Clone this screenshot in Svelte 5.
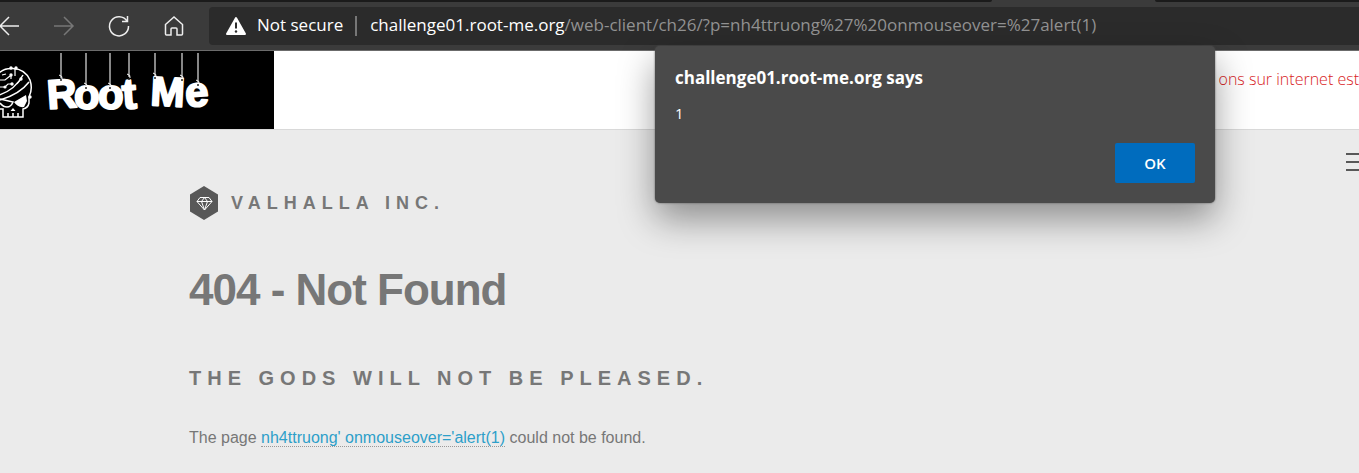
<script>
  const letters = [
    { c: 'R', x: 48, y: 58, r: -4, s: 41 },
    { c: 'o', x: 74, y: 58, r: 0, s: 42 },
    { c: 'o', x: 98, y: 58, r: 0, s: 42 },
    { c: 't', x: 123, y: 58, r: -4, s: 43 },
    { c: 'M', x: 150, y: 54, r: 3, s: 41 },
    { c: 'e', x: 186, y: 56, r: -4, s: 42 }
  ];
  const strings = [[61, 29], [86, 37], [110, 37], [129, 28], [155, 27], [182, 29], [198, 34]];
</script>

<div class="browser">
  <div class="tabs"><i></i><i></i></div>
  <nav class="toolbar" aria-label="Browser">
    <div class="actions">
      <button aria-label="Back"><svg viewBox="0 0 24 24"><path d="M22 12H3M12 3l-9 9 9 9" /></svg></button>
      <button aria-label="Forward" disabled><svg viewBox="0 0 24 24"><path d="M2 12h19M12 3l9 9-9 9" /></svg></button>
      <button aria-label="Refresh"><svg viewBox="0 0 24 24"><path d="M20 7.200A9.500 9.500 0 1 0 21.500 12M20.500 2v5.500H15" /></svg></button>
      <button aria-label="Home"><svg viewBox="0 0 24 24"><path d="M3.500 10.500 12 3l8.500 7.500V20q0 1-1 1H15v-6q0-1-1-1h-4q-1 0-1 1v6H4.500q-1 0-1-1z" /></svg></button>
    </div>
    <div class="address">
      <svg class="warn" viewBox="0 0 22 20"><path d="M11 2 20 18H2z" fill="#fff" stroke="#fff" stroke-width="2" stroke-linejoin="round" /><path d="M11 6.500v6" stroke="#2b2b2b" stroke-width="2" /><circle cx="11" cy="15.500" r="1.200" fill="#2b2b2b" /></svg>
      <span class="secure">Not secure</span>
      <span class="bar"></span>
      <span class="url"><b>challenge01.root-me.org</b>/web-client/ch26/?p=nh4ttruong%27%20onmouseover=%27alert(1)</span>
    </div>
  </nav>
</div>

<header class="banner">
  <a class="brand" href="#home" aria-label="Root Me">
    <svg viewBox="0 0 274 78">
      <g fill="none" stroke="#fff" stroke-width="1.500">
        <path d="M-1 22Q4 17 13 17.500Q25 18 30 29Q33 38 29 46V52Q28 57 23 58V66H3V58H-1" />
        <path d="M-1 44Q15 39 23 24M0 49Q20 43 29 31" />
        <path d="M0 29h5l5-4M0 36h5l3-3h4M15 18v7M11 24v4M21 28l-4 5M2 24l4-1" stroke-width="1.200" />
        <path d="M8 66v-4M13 66v-4M18 66v-4" />
        <path d="M0 48l13 3q-2 5-6 5-4 0-7-4" />
      </g>
      <g fill="#fff"><path d="M14 51 26 44 27 50 24 56Q18 57 14 51zM13 57l2.500 3h-5z" /><circle cx="11" cy="17" r="1.700" /><circle cx="16" cy="17" r="1.700" /><circle cx="11" cy="24" r="1.700" /><circle cx="12" cy="33" r="1.700" /><circle cx="21" cy="28" r="1.700" /><circle cx="5" cy="36" r="1.600" /><circle cx="30" cy="46" r="1.700" /></g>
      {#each letters as l}
        <text x={l.x} y={l.y} font-size={l.s} transform={`rotate(${l.r} ${l.x} ${l.y})`}>{l.c}</text>
      {/each}
      {#each strings as [x, y]}
        <path d={`M${x} 2V${y - 2}`} stroke="#b5b5b5" stroke-width="1.500" />
        <path d={`M${x - 2} ${y - 5}q4 1 3 4`} stroke="#fff" fill="none" />
        <circle cx={x} cy={y} r="1" fill="#222" />
      {/each}
    </svg>
  </a>
  <p>ons sur internet est</p>
</header>

<main>
  <button class="menu" aria-label="Menu"><i></i><i></i><i></i></button>
  <a class="company" href="#home">
    <svg viewBox="0 0 30 34"><path d="M15 0 29 8.500v17L15 34 1 25.500v-17z" fill="#585858" /><path d="M11 11.500h9l3 4-7.500 8.500-7.500-8.500zM8 15.500h15M12.500 15.500l3 8.500 3-8.500M12.500 15.500l3-4 3 4" fill="none" stroke="#fff" stroke-linejoin="round" /></svg>
    <span>VALHALLA INC.</span>
  </a>
  <h1>404 - Not Found</h1>
  <h2>THE GODS WILL NOT BE PLEASED.</h2>
  <p>The page <a href="#page">nh4ttruong' onmouseover='alert(1)</a> could not be found.</p>
</main>

<div class="dialog" role="alertdialog" aria-labelledby="says" aria-describedby="message">
  <strong id="says">challenge01.root-me.org says</strong>
  <p id="message">1</p>
  <button>OK</button>
</div>

<style>
  :global(body) { margin: 0; background: #ebebeb; overflow: hidden; }
  :global(#app) { position: relative; }
  button { border: 0; padding: 0; background: none; }
  .browser { background: #3b3b3b; border-bottom: 1px solid #6b6b6b; font-family: "Open Sans", sans-serif; }
  .tabs { display: flex; justify-content: space-between; height: 2px; }
  .tabs i { background: #1b1b1b; width: 73%; border-radius: 0 0 4px 0; }
  .tabs i + i { width: 15%; border-radius: 0 0 0 4px; }
  .toolbar { display: flex; align-items: center; padding: 5px 0; }
  .actions { display: flex; gap: 31px; width: 209px; margin-left: -3px; flex: none; }
  .actions button { width: 24px; height: 24px; }
  .actions svg { display: block; width: 24px; height: 24px; fill: none; stroke: #eee; stroke-width: 1.5; }
  .actions button:disabled svg { stroke: #777; }
  .address { flex: 1; min-width: 0; height: 38px; margin-left: 3px; display: flex; align-items: center; background: #2b2b2b; border-radius: 4px 0 0 4px; padding-left: 16px; color: #fff; font-size: 17px; line-height: 24px; white-space: nowrap; }
  .address span:not(.bar) { padding-bottom: 2px; }
  .warn { width: 22px; height: 20px; margin-right: 10px; }
  .bar { width: 2px; height: 20px; background: #777; margin: 0 13px 0 12px; }
  .url { color: #929292; }
  .url b { color: #fff; font-weight: 400; }
  .banner { display: flex; justify-content: space-between; height: 78px; background: #fff; border-bottom: 1px solid #d9d9d9; overflow: hidden; }
  .brand { width: 274px; background: #000; }
  .brand svg { display: block; width: 274px; height: 78px; }
  .brand text { fill: #fff; stroke: #fff; stroke-width: 2; stroke-linejoin: round; font-family: "Liberation Sans", sans-serif; font-weight: 700; }
  .banner p { margin: 16px 0 0; color: #d8221d; font: 300 16px/24px "Open Sans", sans-serif; white-space: nowrap; }
  main { position: relative; padding: 56px 189px 0; color: #777; font-family: "Liberation Sans", sans-serif; }
  .menu { position: absolute; right: -9px; top: 23px; width: 22px; display: grid; gap: 6px; }
  .menu i { height: 2px; background: #585858; }
  .company { display: flex; align-items: center; gap: 12px; color: inherit; text-decoration: none; font-size: 18px; font-weight: 900; letter-spacing: 6px; }
  .company svg { width: 30px; height: 34px; }
  h1 { margin: 42px 0 0; font-size: 44px; line-height: 56px; letter-spacing: -1px; }
  h2 { margin: 48px 0 0; font-size: 20px; line-height: 24px; letter-spacing: 6px; font-weight: 900; }
  main p { margin: 36px 0 0; font-size: 16px; line-height: 24px; }
  main p a { color: #2e9fc9; text-decoration: none; border-bottom: 1px dotted #999; }
  .dialog { position: absolute; left: 655px; right: 144px; top: 46px; box-sizing: border-box; padding: 20px; background: #4a4a4a; border-radius: 5px; box-shadow: 0 0 2px #555, 0 16px 36px rgba(0,0,0,.4); color: #fff; font: 15px/24px "Open Sans", sans-serif; display: flex; flex-direction: column; }
  .dialog strong { font-size: 17px; }
  .dialog p { margin: 11px 0 18px; }
  .dialog button { align-self: flex-end; width: 80px; height: 40px; background: #006cbe; border-radius: 2px; color: #fff; font: 600 15px "Open Sans", sans-serif; }
</style>
